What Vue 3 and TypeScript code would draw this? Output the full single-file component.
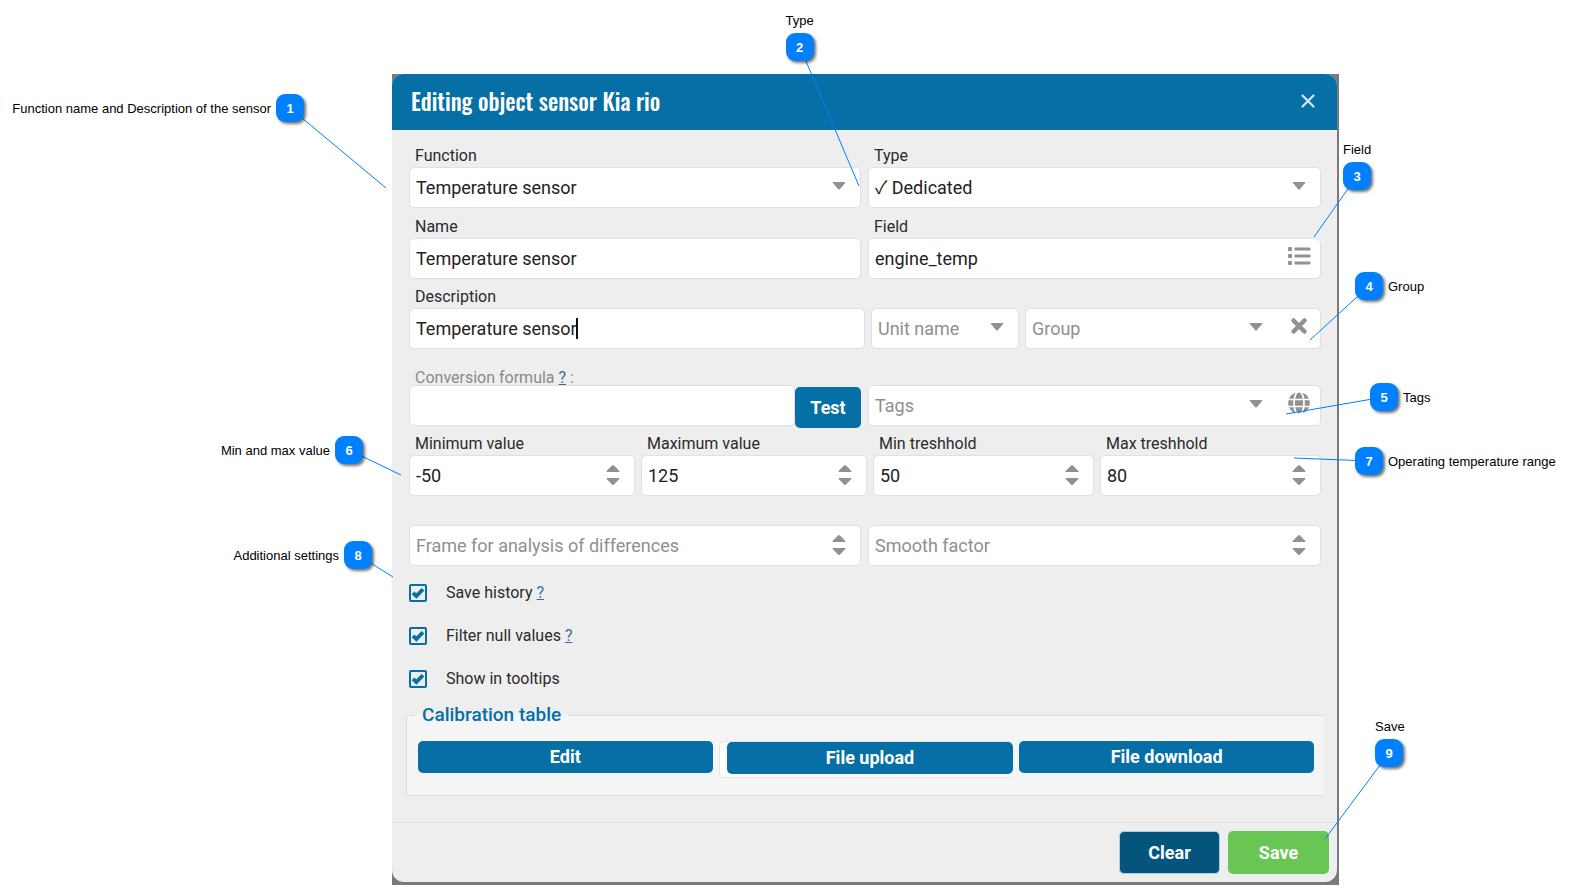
<script setup lang="ts">
import { ref } from 'vue'

interface Callout {
  n: number
  text: string
  anchor: 'left' | 'middle' | 'right'
  x: number
  y: number
  dx: number
  dy: number
  label: 'before' | 'after' | 'above'
}

// x is measured from the anchor edge to the badge centre; dx/dy is the leader's end relative to it
const callouts: Callout[] = [
  { n: 1, text: 'Function name and Description of the sensor', anchor: 'left', x: 290, y: 108, dx: 96, dy: 80, label: 'before' },
  { n: 2, text: 'Type', anchor: 'middle', x: 15, y: 47, dx: 59, dy: 139, label: 'above' },
  { n: 3, text: 'Field', anchor: 'right', x: 212, y: 176, dx: -43, dy: 61, label: 'above' },
  { n: 4, text: 'Group', anchor: 'right', x: 200, y: 286, dx: -59, dy: 54, label: 'after' },
  { n: 5, text: 'Tags', anchor: 'right', x: 185, y: 397, dx: -98, dy: 17, label: 'after' },
  { n: 6, text: 'Min and max value', anchor: 'left', x: 349, y: 450, dx: 52, dy: 25, label: 'before' },
  { n: 7, text: 'Operating temperature range', anchor: 'right', x: 200, y: 461, dx: -75, dy: -3, label: 'after' },
  { n: 8, text: 'Additional settings', anchor: 'left', x: 358, y: 555, dx: 35, dy: 22, label: 'before' },
  { n: 9, text: 'Save', anchor: 'right', x: 180, y: 753, dx: -64, dy: 86, label: 'above' },
]

function place(c: Callout) {
  const top = `${c.y}px`
  if (c.anchor === 'left') return { top, left: `${c.x}px` }
  if (c.anchor === 'right') return { top, left: `calc(100% - ${c.x}px)` }
  return { top, left: `calc(50% + ${c.x}px)` }
}

const name = ref('Temperature sensor')
const field = ref('engine_temp')
const description = ref('Temperature sensor')
const formula = ref('')
const frame = ref<number | ''>('')
const smooth = ref<number | ''>('')

const limits = ref([
  { id: 'min-value', label: 'Minimum value', value: -50 },
  { id: 'max-value', label: 'Maximum value', value: 125 },
  { id: 'min-limit', label: 'Min treshhold', value: 50 },
  { id: 'max-limit', label: 'Max treshhold', value: 80 },
])

const options = ref([
  { id: 'history', label: 'Save history', help: true, on: true },
  { id: 'nulls', label: 'Filter null values', help: true, on: true },
  { id: 'tooltips', label: 'Show in tooltips', help: false, on: true },
])
</script>

<template>
  <main class="figure">
    <div class="backdrop">
      <form class="dialog" @submit.prevent>
        <header class="head">
          <h1>Editing object sensor Kia rio</h1>
          <button type="button" class="close" aria-label="Close">
            <svg width="14" height="14" viewBox="0 0 14 14"><path d="M1.500 1.500l11 11M12.500 1.500l-11 11" /></svg>
          </button>
        </header>

        <div class="body">
          <div class="row halves first">
            <div class="cell">
              <label for="function">Function</label>
              <div class="box">
                <select id="function"><option>Temperature sensor</option></select>
                <svg class="arrow" width="14" height="8" viewBox="0 0 14 8"><path d="M1.2 0h11.6q1 0 .3.9L8 7q-1 1-2 0L.9.9Q.2 0 1.200 0z" /></svg>
              </div>
            </div>
            <div class="cell">
              <label for="type">Type</label>
              <div class="box">
                <select id="type"><option>✓ Dedicated</option></select>
                <svg class="arrow" width="14" height="8" viewBox="0 0 14 8"><path d="M1.2 0h11.6q1 0 .3.9L8 7q-1 1-2 0L.9.9Q.2 0 1.200 0z" /></svg>
              </div>
            </div>
          </div>

          <div class="row halves">
            <div class="cell">
              <label for="name">Name</label>
              <div class="box"><input id="name" v-model="name" type="text" /></div>
            </div>
            <div class="cell">
              <label for="field">Field</label>
              <div class="box">
                <input id="field" v-model="field" type="text" />
                <button type="button" class="tool" aria-label="Choose field">
                  <svg width="24" height="20" viewBox="0 0 24 20">
                    <rect x="1" y="1" width="4" height="4" rx="1" /><rect x="1" y="8" width="4" height="4" rx="1" /><rect x="1" y="15" width="4" height="4" rx="1" />
                    <rect x="7.500" y="1.500" width="16" height="3" rx="1" /><rect x="7.500" y="8.500" width="16" height="3" rx="1" /><rect x="7.500" y="15.500" width="16" height="3" rx="1" />
                  </svg>
                </button>
              </div>
            </div>
          </div>

          <div class="row thirds">
            <div class="cell">
              <label for="description">Description</label>
              <div class="box">
                <input id="description" v-model="description" type="text" />
                <span class="caret"></span>
              </div>
            </div>
            <div class="box">
              <select class="empty" aria-label="Unit name"><option>Unit name</option></select>
              <svg class="arrow" width="14" height="8" viewBox="0 0 14 8"><path d="M1.2 0h11.6q1 0 .3.9L8 7q-1 1-2 0L.9.9Q.2 0 1.200 0z" /></svg>
            </div>
            <div class="box">
              <select class="empty" aria-label="Group"><option>Group</option></select>
              <svg class="arrow inset" width="14" height="8" viewBox="0 0 14 8"><path d="M1.2 0h11.6q1 0 .3.9L8 7q-1 1-2 0L.9.9Q.2 0 1.200 0z" /></svg>
              <button type="button" class="tool" aria-label="Clear group">
                <svg class="cross" width="24" height="20" viewBox="0 0 24 20"><path d="M6.500 4.500l11 11M17.500 4.500l-11 11" /></svg>
              </button>
            </div>
          </div>

          <div class="row halves formula">
            <div class="cell">
              <div class="caption">
                <label for="formula">Conversion formula</label> <a href="#formula">?</a> :
              </div>
              <div class="joined">
                <div class="box"><input id="formula" v-model="formula" type="text" /></div>
                <button type="button" class="btn test">Test</button>
              </div>
            </div>
            <div class="box">
              <select class="empty" aria-label="Tags"><option>Tags</option></select>
              <svg class="arrow inset" width="14" height="8" viewBox="0 0 14 8"><path d="M1.2 0h11.6q1 0 .3.9L8 7q-1 1-2 0L.9.9Q.2 0 1.200 0z" /></svg>
              <button type="button" class="tool globe" aria-label="All tags">
                <svg width="24" height="22" viewBox="0 0 24 22">
                  <circle cx="12" cy="11" r="10.800" />
                  <path d="M1 7.500h22M1 14.500h22" />
                  <ellipse cx="12" cy="11" rx="5" ry="11.500" />
                </svg>
              </button>
            </div>
          </div>

          <div class="row quarters">
            <div v-for="l in limits" :key="l.id" class="cell">
              <label :for="l.id">{{ l.label }}</label>
              <div class="box">
                <input :id="l.id" v-model="l.value" type="number" />
                <span class="stepper">
                  <button type="button" aria-label="Increase" @click="l.value++"><svg width="14" height="7" viewBox="0 0 14 7"><path d="M1 7h12q1 0 .3-.9L8 .6q-1-1-2 0L.7 6.100Q0 7 1 7z" /></svg></button>
                  <button type="button" aria-label="Decrease" @click="l.value--"><svg width="14" height="7" viewBox="0 0 14 7"><path d="M1 0h12q1 0 .3.9L8 6.400q-1 1-2 0L.7.9Q0 0 1 0z" /></svg></button>
                </span>
              </div>
            </div>
          </div>

          <div class="row halves spaced">
            <div class="box">
              <input v-model="frame" type="number" placeholder="Frame for analysis of differences" aria-label="Frame for analysis of differences" />
              <span class="stepper">
                <button type="button" aria-label="Increase" @click="frame = Number(frame) + 1"><svg width="14" height="7" viewBox="0 0 14 7"><path d="M1 7h12q1 0 .3-.9L8 .6q-1-1-2 0L.7 6.100Q0 7 1 7z" /></svg></button>
                <button type="button" aria-label="Decrease" @click="frame = Number(frame) - 1"><svg width="14" height="7" viewBox="0 0 14 7"><path d="M1 0h12q1 0 .3.9L8 6.400q-1 1-2 0L.7.9Q0 0 1 0z" /></svg></button>
              </span>
            </div>
            <div class="box">
              <input v-model="smooth" type="number" placeholder="Smooth factor" aria-label="Smooth factor" />
              <span class="stepper">
                <button type="button" aria-label="Increase" @click="smooth = Number(smooth) + 1"><svg width="14" height="7" viewBox="0 0 14 7"><path d="M1 7h12q1 0 .3-.9L8 .6q-1-1-2 0L.7 6.100Q0 7 1 7z" /></svg></button>
                <button type="button" aria-label="Decrease" @click="smooth = Number(smooth) - 1"><svg width="14" height="7" viewBox="0 0 14 7"><path d="M1 0h12q1 0 .3.9L8 6.400q-1 1-2 0L.7.9Q0 0 1 0z" /></svg></button>
              </span>
            </div>
          </div>

          <div class="checks">
            <div v-for="o in options" :key="o.id" class="check">
              <span class="tick">
                <input :id="o.id" v-model="o.on" type="checkbox" />
                <svg v-if="o.on" width="18" height="18" viewBox="0 0 18 18"><path d="M4 8.800l3.400 3.200L14 5.200" /></svg>
              </span>
              <span><label :for="o.id">{{ o.label }}</label><template v-if="o.help">&nbsp;<a :href="'#' + o.id">?</a></template></span>
            </div>
          </div>

          <fieldset>
            <legend>Calibration table</legend>
            <div class="actions">
              <button type="button" class="btn">Edit</button>
              <div class="upload"><button type="button" class="btn">File upload</button></div>
              <button type="button" class="btn">File download</button>
            </div>
          </fieldset>
        </div>

        <footer class="foot">
          <button type="reset" class="btn clear">Clear</button>
          <button type="submit" class="btn save">Save</button>
        </footer>
      </form>
    </div>

    <div v-for="c in callouts" :key="c.n" class="callout" :style="place(c)">
      <svg class="leader" width="1" height="1"><line x1="0" y1="0" :x2="c.dx" :y2="c.dy" /></svg>
      <span class="badge">{{ c.n }}</span>
      <span class="note" :class="c.label">{{ c.text }}</span>
    </div>
  </main>
</template>

<style>
body {
  margin: 0;
  background: #fff;
}
</style>

<style scoped>
* {
  box-sizing: border-box;
}

.figure {
  position: relative;
  padding: 74px 230px 3px 392px;
  font-family: Roboto, sans-serif;
  color: #2b2b2b;
}

.backdrop {
  padding: 0 2px 3px 0;
  background: #777b7d;
}

.dialog {
  overflow: hidden;
  border-radius: 12px;
  background: #eee;
}

.head {
  display: flex;
  align-items: center;
  justify-content: space-between;
  height: 56px;
  padding: 0 22px 3px 19px;
  background: #066fa5;
}

h1 {
  margin: 0;
  font: 500 23px/32px Oswald, "Roboto Condensed", "Liberation Sans Narrow", sans-serif;
  color: #fff;
}

button {
  border: 0;
  padding: 0;
  font: inherit;
  background: none;
  cursor: pointer;
}

.close {
  height: 14px;
}

svg {
  display: block;
}

.close path {
  stroke: #d5e8f2;
  stroke-width: 2.200;
  stroke-linecap: round;
}

.body {
  padding: 15px 16px 26px 17px;
}

.row {
  display: grid;
  gap: 7px;
  align-items: end;
  margin-bottom: 7px;
}

.first {
  margin-bottom: 8px;
}

.halves {
  grid-template-columns: 452fr 453fr;
}

.thirds {
  grid-template-columns: 456fr 148fr 296fr;
  gap: 6px;
}

.quarters {
  grid-template-columns: 226fr 226fr 221fr 221fr;
  gap: 6px;
}

.formula {
  margin-top: 22px;
}

.spaced {
  margin-top: 29px;
}

.cell > label,
.caption {
  display: block;
  padding-left: 6px;
  font-size: 16px;
  line-height: 22px;
}

.caption {
  line-height: 14px;
  color: #8a8a8a;
}

a {
  color: #3c6ba0;
}

.box {
  position: relative;
  flex: 1;
  height: 41px;
  border: 1px solid #e0e0e0;
  border-radius: 5px;
  background: #fff;
}

.box input,
.box select {
  display: block;
  width: 100%;
  height: 100%;
  margin: 0;
  padding: 0 48px 0 6px;
  border: 0;
  outline: 0;
  font: 18px/24px Roboto, "Noto Sans CJK JP", sans-serif;
  color: #222;
  background: transparent;
  appearance: none;
}

.box input[type="number"] {
  appearance: textfield;
}

.box .empty {
  color: #8f8f8f;
}

.box input::placeholder {
  color: #8f8f8f;
  opacity: 1;
}

.arrow {
  position: absolute;
  top: 14px;
  right: 14px;
  fill: #919191;
  pointer-events: none;
}

.arrow.inset {
  right: 57px;
}

.tool {
  position: absolute;
  top: 7px;
  right: 9px;
  fill: #919191;
}

.tool.globe {
  top: 6px;
}

.globe path,
.globe ellipse {
  fill: none;
  stroke: #fff;
  stroke-width: 1.700;
}

.cross {
  stroke: #919191;
  stroke-width: 4.500;
  stroke-linecap: round;
}

.caret {
  position: absolute;
  top: 9px;
  left: 166px;
  width: 2px;
  height: 21px;
  background: #111;
}

.stepper {
  position: absolute;
  top: 9px;
  right: 14px;
  display: grid;
  gap: 6px;
  fill: #919191;
}

.joined {
  display: flex;
}

.btn {
  height: 32px;
  border-radius: 5px;
  font: 700 18px/24px Roboto, sans-serif;
  color: #fff;
  background: #066fa5;
}

.test {
  width: 66px;
  height: 41px;
  margin: 2px 0 -2px;
}

.check {
  display: flex;
  align-items: center;
  gap: 19px;
  height: 43px;
  font-size: 16px;
}

.checks {
  padding: 0 0 3px;
  margin-top: -2px;
}

.tick {
  position: relative;
  width: 18px;
  height: 18px;
}

.tick input {
  display: block;
  width: 18px;
  height: 18px;
  margin: 0;
  border: 2px solid #066fa5;
  border-radius: 2px;
  appearance: none;
}

.tick svg {
  position: absolute;
  top: 0;
  left: 0;
  fill: none;
  stroke: #066fa5;
  stroke-width: 3.800;
  pointer-events: none;
}

fieldset {
  min-width: 0;
  margin: 0 -3px;
  padding: 14px 10px 17px 11px;
  border: 1px solid #dedede;
  border-right: 0;
  background: #f5f5f5;
}

legend {
  margin-left: -3px;
  padding: 0 7px;
  font-size: 19px;
  font-weight: 500;
  line-height: 24px;
  color: #066fa5;
}

.actions {
  display: grid;
  grid-template-columns: 1fr 1fr 1fr;
  gap: 6px;
}

.upload {
  display: flex;
  height: 37px;
  padding-left: 7px;
  border: 1px solid #e4e4e4;
  border-right: 0;
  border-radius: 5px;
  background: #fff;
}

.upload .btn {
  flex: 1;
}

.foot {
  display: flex;
  justify-content: flex-end;
  align-items: center;
  gap: 8px;
  padding: 8px;
  border-top: 1px solid #e0e0e0;
}

.clear,
.save {
  width: 101px;
  height: 43px;
}

.clear {
  border: 1px solid #a9cfee;
  background: #04547c;
}

.save {
  background: #69c655;
}

.callout {
  position: absolute;
  font: 13px/16px "Liberation Sans", Arial, sans-serif;
  color: #000;
}

.leader {
  position: absolute;
  overflow: visible;
}

.leader line {
  stroke: #0080ff;
  stroke-width: 1;
}

.badge {
  position: absolute;
  top: -14px;
  left: -14px;
  width: 28px;
  height: 28px;
  border-radius: 9px;
  font-weight: 700;
  line-height: 29px;
  text-align: center;
  color: #fff;
  background: #0080ff;
  box-shadow: 2px 2px 3px rgba(0, 0, 0, 0.55);
}

.note {
  position: absolute;
  white-space: nowrap;
}

.note.before {
  top: -7px;
  right: 19px;
}

.note.after {
  top: -7px;
  left: 19px;
}

.note.above {
  top: -34px;
  left: -14px;
}
</style>
